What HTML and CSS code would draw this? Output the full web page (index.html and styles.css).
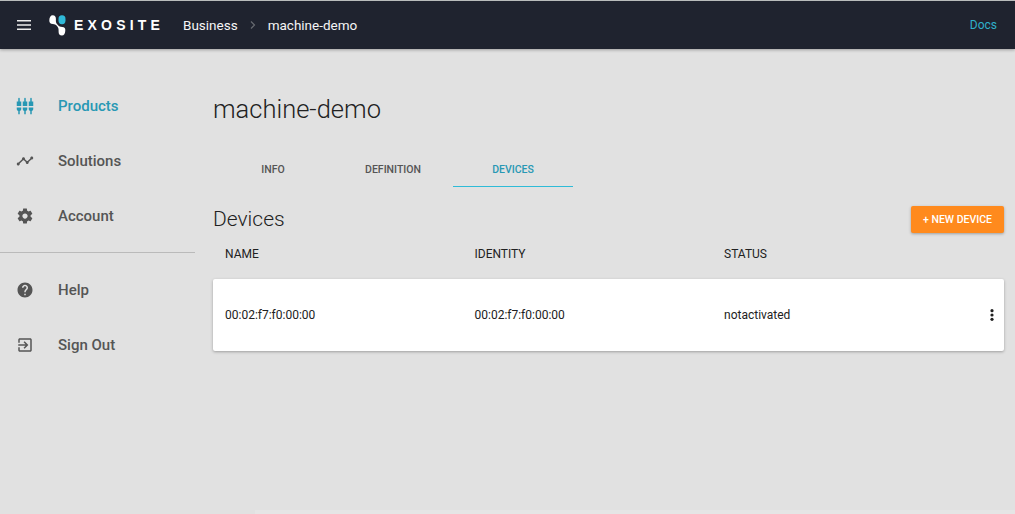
FILE: index.html
```html
<!DOCTYPE html>
<html lang="en">
<head>
<meta charset="utf-8">
<title>machine-demo</title>
<link rel="stylesheet" href="styles.css">
</head>
<body>
<header class="topbar">
  <svg class="menu" viewBox="0 0 14 10"><path d="M0 0h14v1.5H0zM0 4.25h14v1.5H0zM0 8.5h14V10H0z"/></svg>
  <svg class="mark" viewBox="0 0 17 21">
    <path class="white" d="M3.700.2C6 .2 7.200 2 6.900 4.500C6.700 6.800 7 8 8.400 9.600C10 11.400 11.200 12.100 13.200 12.100C15.600 12.100 16.500 13.500 16.300 15.700C16.100 18.600 15 20.500 12.900 20.500C10.600 20.500 9.500 19 9.600 16.400C9.700 13.800 9.400 12.600 8 11C6.600 9.500 5.600 9.200 3.900 9.100C1.300 9 .2 7.500.3 5.200C.4 2.200 1.600.2 3.700.2z"/>
    <rect class="cyan" x="9.500" y=".2" width="7" height="9" rx="3.300" ry="3.700"/>
  </svg>
  <span class="wordmark">EXOSITE</span>
  <nav class="crumbs">
    <span>Business</span>
    <svg class="chevron" viewBox="0 0 6 8"><path d="M1 .5L4.500 4L1 7.500"/></svg>
    <span>machine-demo</span>
  </nav>
  <a class="docs">Docs</a>
</header>
<div class="layout">
  <aside class="sidebar">
    <a class="item active"><svg viewBox="0 0 24 24"><path d="M5 2c0-.55-.45-1-1-1s-1 .45-1 1v4H1v6h6V6H5V2zm4 14c0 1.300.84 2.400 2 2.820V23h2v-4.180c1.160-.41 2-1.510 2-2.820v-2H9v2zm-8 0c0 1.300.84 2.400 2 2.820V23h2v-4.180C6.160 18.400 7 17.300 7 16v-2H1v2zM21 6V2c0-.55-.45-1-1-1s-1 .45-1 1v4h-2v6h6V6h-2zm-8-4c0-.55-.45-1-1-1s-1 .45-1 1v4H9v6h6V6h-2V2zm4 14c0 1.300.84 2.400 2 2.820V23h2v-4.180c1.160-.41 2-1.510 2-2.820v-2h-6v2z"/></svg><span>Products</span></a>
    <a class="item"><svg viewBox="0 0 24 24"><path d="M23 8c0 1.100-.9 2-2 2-.18 0-.35-.02-.51-.07l-3.560 3.550c.05.16.07.34.07.52 0 1.100-.9 2-2 2s-2-.9-2-2c0-.18.02-.36.07-.52l-2.550-2.550c-.16.05-.34.07-.52.07s-.36-.02-.52-.07l-4.550 4.560c.05.16.07.33.07.51 0 1.100-.9 2-2 2s-2-.9-2-2 .9-2 2-2c.18 0 .35.02.51.07l4.560-4.550C8.020 9.360 8 9.180 8 9c0-1.100.9-2 2-2s2 .9 2 2c0 .18-.02.36-.07.52l2.550 2.550c.16-.05.34-.07.52-.07s.36.02.52.07l3.550-3.560C19.020 8.350 19 8.180 19 8c0-1.100.9-2 2-2s2 .9 2 2z"/></svg><span>Solutions</span></a>
    <a class="item"><svg viewBox="0 0 24 24"><path d="M19.430 12.980c.04-.32.07-.64.07-.98s-.03-.66-.07-.98l2.110-1.650c.19-.15.24-.42.12-.64l-2-3.460c-.12-.22-.39-.3-.61-.22l-2.490 1c-.52-.4-1.080-.73-1.690-.98l-.38-2.650C14.460 2.180 14.250 2 14 2h-4c-.25 0-.46.18-.49.42l-.38 2.650c-.61.25-1.170.59-1.690.98l-2.490-1c-.23-.09-.49 0-.61.22l-2 3.460c-.13.22-.07.49.12.64l2.110 1.650c-.04.32-.07.65-.07.98s.03.66.07.98l-2.110 1.650c-.19.15-.24.42-.12.64l2 3.460c.12.22.39.3.61.22l2.490-1c.52.4 1.080.73 1.690.98l.38 2.650c.03.24.24.42.49.42h4c.25 0 .46-.18.49-.42l.38-2.650c.61-.25 1.170-.59 1.690-.98l2.490 1c.23.09.49 0 .61-.22l2-3.460c.12-.22.07-.49-.12-.64l-2.110-1.650zM12 15.500c-1.930 0-3.500-1.570-3.500-3.500s1.570-3.500 3.500-3.500 3.500 1.570 3.500 3.500-1.570 3.500-3.500 3.500z"/></svg><span>Account</span></a>
    <hr class="rule">
    <a class="item"><svg viewBox="0 0 24 24"><path d="M12 2C6.480 2 2 6.480 2 12s4.480 10 10 10 10-4.480 10-10S17.520 2 12 2zm1 17h-2v-2h2v2zm2.070-7.750l-.9.920C13.450 12.900 13 13.500 13 15h-2v-.5c0-1.100.45-2.100 1.170-2.830l1.240-1.260c.37-.36.59-.86.59-1.410 0-1.100-.9-2-2-2s-2 .9-2 2H8c0-2.210 1.790-4 4-4s4 1.790 4 4c0 .88-.36 1.680-.93 2.250z"/></svg><span>Help</span></a>
    <a class="item"><svg viewBox="0 0 24 24"><path d="M10.090 15.590L11.500 17l5-5-5-5-1.410 1.410L12.670 11H3v2h9.670l-2.580 2.590zM19 3H5c-1.110 0-2 .9-2 2v4h2V5h14v14H5v-4H3v4c0 1.100.89 2 2 2h14c1.100 0 2-.9 2-2V5c0-1.100-.9-2-2-2z"/></svg><span>Sign Out</span></a>
  </aside>
  <main class="content">
    <h1>machine-demo</h1>
    <nav class="tabs"><a>INFO</a><a>DEFINITION</a><a class="selected">DEVICES</a></nav>
    <div class="section-head"><h2>Devices</h2><button class="new">+ NEW DEVICE</button></div>
    <div class="row head"><span>NAME</span><span>IDENTITY</span><span>STATUS</span></div>
    <div class="row card"><span>00:02:f7:f0:00:00</span><span>00:02:f7:f0:00:00</span><span>notactivated</span>
      <svg class="more" viewBox="0 0 4 12"><circle cx="2" cy="1.700" r="1.600"/><circle cx="2" cy="6" r="1.600"/><circle cx="2" cy="10.300" r="1.600"/></svg>
    </div>
  </main>
</div>
<footer class="status-edge"></footer>
</body>
</html>
```
FILE: styles.css
```css
* { box-sizing: border-box; }
body {
  margin: 0;
  height: 514px;
  overflow: hidden;
  display: flex;
  flex-direction: column;
  background: #e1e1e1;
  color: #212121;
  font-family: Roboto, sans-serif;
}
.topbar {
  flex: none;
  height: 49px;
  display: flex;
  align-items: center;
  padding: 0 18px 0 17px;
  background: #1f232f;
  border-top: 1px solid #b9bcbc;
  box-shadow: 0 1px 3px rgba(0, 0, 0, .3);
  color: #f5f5f5;
}
.menu { width: 14px; height: 10px; fill: #eee; }
.mark { width: 17px; height: 21px; margin-left: 18px; }
.white { fill: #fff; }
.cyan { fill: #2fb9d8; }
.wordmark {
  width: 109px;
  margin-left: 8px;
  font: 700 14px/20px "Liberation Sans", sans-serif;
  letter-spacing: 4.2px;
  color: #fff;
  white-space: nowrap;
}
.crumbs {
  display: flex;
  align-items: center;
  gap: 12px;
  font-size: 13.5px;
  line-height: 20px;
}
.chevron { width: 6px; height: 8px; fill: none; stroke: #666a70; stroke-width: 1.2; }
.docs { margin-left: auto; font-size: 12px; color: #2fb0ca; }
.layout { flex: 1; display: flex; gap: 18px; }
.sidebar { width: 195px; padding-top: 29px; }
.item {
  height: 55px;
  display: flex;
  align-items: center;
  gap: 24px;
  padding-left: 16px;
  font-size: 15px;
  font-weight: 500;
  color: #555;
}
.item svg { width: 18px; height: 18px; fill: currentColor; }
.active { color: #2898b4; }
.rule { height: 1px; margin: 9px 0; border: 0; background: #bababa; }
.content { width: 791px; padding-top: 43px; }
h1, h2 { margin: 0; font-weight: 300; }
h1 { font-size: 25.5px; line-height: 34px; }
.tabs { display: flex; margin-top: 26px; }
.tabs a {
  width: 120px;
  height: 35px;
  text-align: center;
  font-size: 10.5px;
  font-weight: 500;
  line-height: 35px;
  color: #555;
}
.tabs .selected { color: #2898b4; border-bottom: 1px solid #2fbbd7; }
.section-head { display: flex; justify-content: space-between; align-items: center; margin-top: 19px; height: 27px; }
h2 { font-size: 21px; line-height: 26px; padding-bottom: 2px; }
.new {
  width: 93px;
  height: 27px;
  padding: 0;
  border: 0;
  border-radius: 2px;
  background: #ff8a1d;
  box-shadow: 0 1px 3px rgba(0, 0, 0, .3);
  color: #fff;
  font: 500 10.5px/27px Roboto, sans-serif;
}
.row {
  display: grid;
  grid-template-columns: 249.5px 249.5px 1fr 4px;
  align-items: center;
  padding: 0 10px 0 12px;
  font-size: 12px;
}
.head { height: 46px; padding-bottom: 4px; }
.card {
  height: 72px;
  border-radius: 2px;
  background: #fff;
  box-shadow: 0 1px 3px rgba(0, 0, 0, .3);
}
.more { width: 4px; height: 12px; fill: #212121; }
.status-edge { flex: none; height: 4px; margin-left: 255px; background: #e5e5e5; }
```
